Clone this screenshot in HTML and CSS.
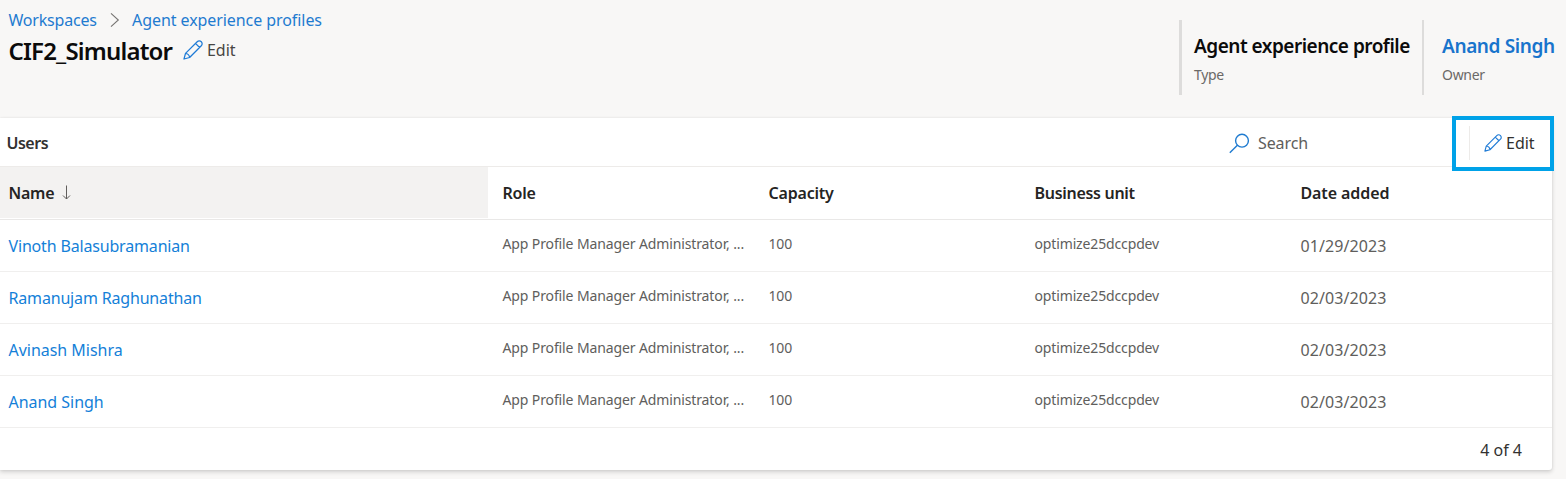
FILE: index.html
```html
<!DOCTYPE html>
<html lang="en">
<head>
<meta charset="utf-8">
<title>CIF2_Simulator</title>
<link rel="stylesheet" href="styles.css">
</head>
<body>
<header class="page-header">
  <div class="heading">
    <nav class="breadcrumb">
      <a class="crumb crumb-root">Workspaces</a>
      <svg class="chevron" width="10" height="16" viewBox="0 0 10 16"><path d="M1 1.3 8.3 8 1 14.7"/></svg>
      <a class="crumb crumb-leaf">Agent experience profiles</a>
    </nav>
    <div class="title-row">
      <h1 class="title">CIF2_Simulator</h1>
      <svg class="pencil" width="20" height="20" viewBox="0 0 20 20"><path d="M1 19l1.5-5.6L14.2 1.7a2.5 2.5 0 0 1 4.1 4.1L6.6 17.5zM2.5 13.4c2 .2 3.9 2.1 4.1 4.1M12.5 3.4l4.1 4.1"/></svg>
      <span class="title-edit">Edit</span>
    </div>
  </div>
  <dl class="facts">
    <div class="fact fact-type"><dd class="fact-value type-value">Agent experience profile</dd><dt class="fact-label">Type</dt></div>
    <div class="fact fact-owner"><dd class="fact-value owner-value">Anand Singh</dd><dt class="fact-label owner-label">Owner</dt></div>
  </dl>
</header>
<main class="card">
  <div class="toolbar">
    <h2 class="section-title">Users</h2>
    <div class="search">
      <svg class="magnifier" width="21" height="21" viewBox="0 0 21 21"><circle cx="13" cy="7.7" r="6.4"/><path d="M8.4 12.3.8 19.8"/></svg>
      <span class="search-text">Search</span>
    </div>
    <button class="edit-button">
      <span class="separator"></span>
      <svg class="pencil" width="18" height="18" viewBox="0 0 20 20"><path d="M1 19l1.5-5.6L14.2 1.7a2.5 2.5 0 0 1 4.1 4.1L6.6 17.5zM2.5 13.4c2 .2 3.9 2.1 4.1 4.1M12.5 3.4l4.1 4.1"/></svg>
      <span class="edit-text">Edit</span>
    </button>
  </div>
  <div class="grid-row grid-head">
    <div class="cell head-name"><span class="h-name">Name</span><svg class="arrow" width="9" height="15" viewBox="0 0 9 15"><path d="M4.5.5v13.5M1 10.5l3.5 3.5L8 10.5"/></svg></div>
    <div class="cell"><span class="h-role">Role</span></div>
    <div class="cell"><span class="h-cap">Capacity</span></div>
    <div class="cell"><span class="h-unit">Business unit</span></div>
    <div class="cell"><span class="h-date">Date added</span></div>
  </div>
  <div class="grid-row">
    <a class="cell name">Vinoth Balasubramanian</a><div class="cell small role">App Profile Manager Administrator, ...</div><div class="cell small cap">100</div><div class="cell small unit">optimize25dccpdev</div><div class="cell date">01/29/2023</div>
  </div>
  <div class="grid-row">
    <a class="cell name">Ramanujam Raghunathan</a><div class="cell small role">App Profile Manager Administrator, ...</div><div class="cell small cap">100</div><div class="cell small unit">optimize25dccpdev</div><div class="cell date">02/03/2023</div>
  </div>
  <div class="grid-row">
    <a class="cell name name-short">Avinash Mishra</a><div class="cell small role">App Profile Manager Administrator, ...</div><div class="cell small cap">100</div><div class="cell small unit">optimize25dccpdev</div><div class="cell date">02/03/2023</div>
  </div>
  <div class="grid-row">
    <a class="cell name name-short">Anand Singh</a><div class="cell small role">App Profile Manager Administrator, ...</div><div class="cell small cap">100</div><div class="cell small unit">optimize25dccpdev</div><div class="cell date">02/03/2023</div>
  </div>
  <footer class="card-footer">4 of 4</footer>
</main>
</body>
</html>
```
FILE: styles.css
```css
* { box-sizing: border-box; }
body {
  margin: 0;
  height: 479px;
  overflow: hidden;
  background: #f8f7f6;
  color: #323130;
  font-family: "Noto Sans", "Open Sans", sans-serif;
  font-size: 16px;
  white-space: nowrap;
}
h1, h2, dl, dd { margin: 0; }
svg { display: block; flex: none; fill: none; }
.page-header { display: flex; justify-content: space-between; height: 118px; }
.heading { padding: 8px 0 0 8.5px; }
.breadcrumb { display: flex; align-items: center; height: 24px; }
.crumb { color: #1f7bd0; letter-spacing: -0.2px; }
.crumb-root { width: 101.5px; }
.crumb-leaf { margin-left: 12px; letter-spacing: -0.07px; }
.chevron { stroke: #767472; stroke-width: 1.1; }
.title-row { display: flex; align-items: center; height: 36px; }
.title { width: 174.5px; padding-top: 2px; font-size: 24px; font-weight: 600; line-height: 36px; letter-spacing: -0.82px; color: #0b0b0b; }
.pencil { stroke: #1f7bd6; stroke-width: 1.25; stroke-linejoin: round; }
.title-edit { margin-left: 4px; color: #484644; letter-spacing: -0.05px; }
.facts { display: flex; padding-top: 20px; }
.fact { display: flex; flex-direction: column; height: 75px; padding-top: 13px; }
.fact-type { width: 243px; padding-left: 12px; border-left: 3px solid #dddcdb; }
.fact-owner { width: 144px; padding-left: 18px; border-left: 2px solid #dddcdb; }
.fact-value { height: 26px; font-size: 19px; line-height: 26px; font-weight: 600; letter-spacing: -0.5px; color: #0b0b0b; }
.owner-value { color: #1874cc; letter-spacing: -0.38px; }
.fact-label { margin-top: 6px; font-size: 14px; line-height: 20px; color: #6b6967; letter-spacing: -0.3px; }
.owner-label { letter-spacing: -0.3px; }
.card {
  width: 1552px;
  height: 352px;
  background: #fff;
  border-radius: 0 0 3px 0;
  box-shadow: 0 2px 4px rgba(0, 0, 0, .16), 0 0 2px rgba(0, 0, 0, .08);
}
.toolbar { display: flex; align-items: center; height: 49px; padding-left: 6.5px; border-bottom: 1px solid #edebe9; }
.section-title { flex: none; width: 1222.5px; padding-top: 1px; font-size: 16px; font-weight: 600; letter-spacing: -0.5px; }
.search { display: flex; flex: none; align-items: center; width: 223px; padding-top: 2px; }
.magnifier { stroke: #1f7bd0; stroke-width: 1.4; }
.search-text { margin-left: 8px; color: #605e5c; letter-spacing: -0.1px; }
.edit-button {
  display: flex;
  align-items: center;
  flex: none;
  position: relative;
  top: 1px;
  width: 102px;
  height: 55px;
  padding: 0;
  border: 4px solid #00a2e8;
  background: #fff;
  color: #323130;
  font: inherit;
}
.separator { width: 1px; height: 34px; margin: 0 14px 0 13px; background: #edebe9; }
.edit-text { margin-left: 4px; letter-spacing: 0; }
.grid-row {
  display: grid;
  grid-template-columns: 488px 266px 266px 266px 1fr;
  height: 52px;
  line-height: 51px;
  border-bottom: 1px solid #f0efee;
}
.grid-head { height: 53px; font-weight: 600; color: #252423; border-color: #e9e8e7; }
.cell { padding-left: 14.5px; overflow: hidden; }
.grid-head .cell { line-height: 52px; }
.grid-head .head-name { display: flex; align-items: center; height: 51px; padding-left: 8.5px; background: #f3f2f1; }
.grid-head span { font-size: 16px; letter-spacing: -0.2px; }
.grid-head .h-unit { letter-spacing: -0.3px; }
.grid-head .h-date { letter-spacing: -0.1px; }
.head-name .h-name { width: 53px; letter-spacing: -0.25px; }
.arrow { stroke: #605e5c; stroke-width: 1; }
.grid-row .name { padding-left: 8.5px; line-height: 53px; color: #1480d8; letter-spacing: -0.17px; }
.grid-row .name-short { line-height: 52px; letter-spacing: -0.03px; }
.small { font-size: 14px; line-height: 48px; color: #605e5c; letter-spacing: -0.14px; }
.role { letter-spacing: -0.12px; }
.date { line-height: 53px; color: #605e5c; letter-spacing: 0.1px; }
.card-footer { padding-right: 30px; text-align: right; line-height: 45px; }
```
